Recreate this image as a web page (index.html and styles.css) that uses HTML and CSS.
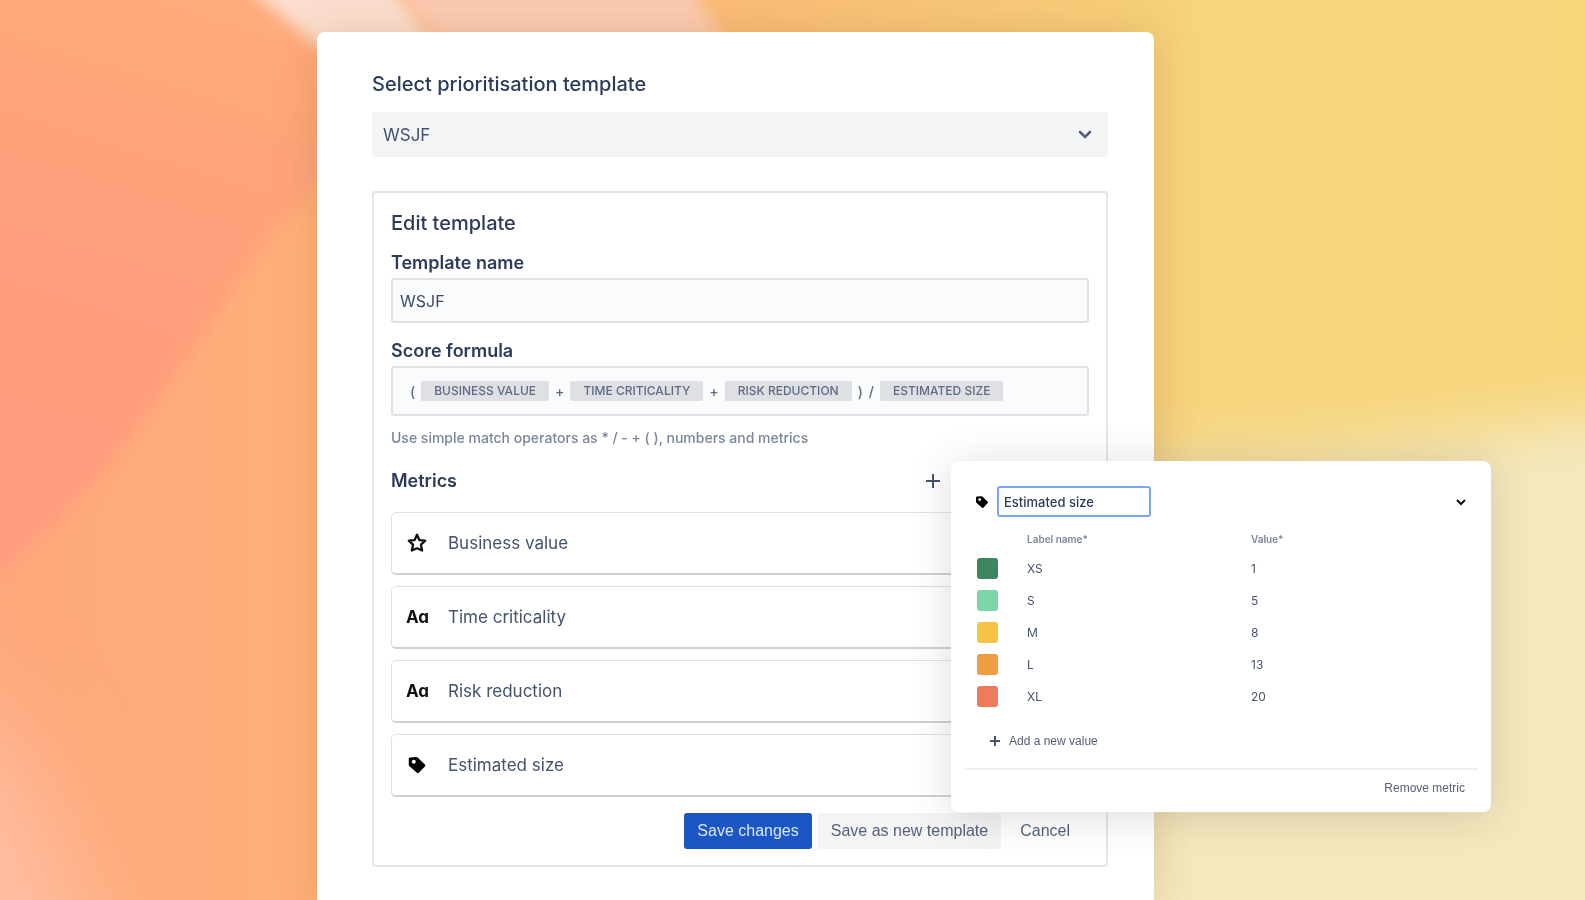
FILE: index.html
```
<!DOCTYPE html>
<html lang="en">
<head>
    <meta charset="UTF-8">
    <meta name="viewport" content="width=device-width, initial-scale=1.0">
    <title>Prioritisation template</title>
    <link rel="stylesheet" href="styles.css">
</head>
<body>
    <svg class="backdrop" viewBox="0 0 1585 900" preserveAspectRatio="none" aria-hidden="true">
        <defs>
            <linearGradient id="base" x1="0" y1="0" x2="1" y2="0">
                <stop offset="0" stop-color="#fea77b"/>
                <stop offset="0.18" stop-color="#ffaf79"/>
                <stop offset="0.48" stop-color="#fabd76"/>
                <stop offset="0.72" stop-color="#f6cf79"/>
                <stop offset="0.76" stop-color="#f6d57e"/>
                <stop offset="1" stop-color="#f7d57b"/>
            </linearGradient>
            <linearGradient id="coral" gradientUnits="userSpaceOnUse" x1="260" y1="0" x2="100" y2="500">
                <stop offset="0" stop-color="#ffab7a"/>
                <stop offset="0.3" stop-color="#fea37a"/>
                <stop offset="0.6" stop-color="#ff9f7b"/>
                <stop offset="1" stop-color="#ff9a80"/>
            </linearGradient>
            <filter id="soft" x="-50%" y="-50%" width="200%" height="200%">
                <feGaussianBlur stdDeviation="8"/>
            </filter>
            <filter id="softer" x="-50%" y="-50%" width="200%" height="200%">
                <feGaussianBlur stdDeviation="50"/>
            </filter>
            <filter id="cream" x="-50%" y="-50%" width="200%" height="200%">
                <feGaussianBlur stdDeviation="30"/>
            </filter>
        </defs>
        <rect width="1585" height="900" fill="url(#base)"/>
        <path d="M-200 640C0 650 40 780 130 1050H-200Z" fill="#ffbfa2" filter="url(#softer)"/>
        <path d="M-60 -60H360V150C230 230 170 470 -60 610Z" fill="url(#coral)" filter="url(#soft)"/>
        <path d="M225 -30H380L450 60H335Z" fill="#fbdecf" filter="url(#soft)"/>
        <path d="M380 -30H680L735 60H450Z" fill="#fbcab0" filter="url(#soft)"/>
        <path d="M850 480C1300 470 1450 430 1700 400V1100H850Z" fill="#f4e8bd" filter="url(#cream)"/>
    </svg>

    <main class="stage">
        <form class="panel">
            <label class="panel-title" for="template">Select prioritisation template</label>
            <div class="select-wrap">
                <select id="template">
                    <option>WSJF</option>
                </select>
                <svg class="select-arrow" width="16" height="16" viewBox="0 0 16 16" aria-hidden="true"><path d="M3 6l5 5 5-5"/></svg>
            </div>

            <section class="editor">
                <h2>Edit template</h2>

                <label class="field-label" for="templateName">Template name</label>
                <input class="text-field" type="text" id="templateName" value="WSJF">

                <h3 class="field-label">Score formula</h3>
                <div class="formula">
                    <span>(</span>
                    <span class="chip">BUSINESS VALUE</span>
                    <span>+</span>
                    <span class="chip">TIME CRITICALITY</span>
                    <span>+</span>
                    <span class="chip">RISK REDUCTION</span>
                    <span>)</span>
                    <span>/</span>
                    <span class="chip">ESTIMATED SIZE</span>
                </div>
                <p class="hint">Use simple match operators as * / - + ( ), numbers and metrics</p>

                <div class="metrics-head">
                    <h3>Metrics</h3>
                    <button type="button" class="icon-button" aria-label="Add metric">
                        <svg class="line-icon" width="16" height="16" viewBox="0 0 16 16"><path d="M8 1v14M1 8h14"/></svg>
                    </button>
                </div>

                <ul class="metrics">
                    <li>
                        <svg class="metric-icon star" viewBox="0 0 24 24" aria-hidden="true"><path d="M12 3l2.600 5.800 6.400.7-4.700 4.300 1.300 6.400-5.600-2.400-5.600 2.400 1.300-6.400L3 9.500l6.400-.7z"/></svg>
                        Business value
                    </li>
                    <li><span class="metric-icon letters">Aa</span>Time criticality</li>
                    <li><span class="metric-icon letters">Aa</span>Risk reduction</li>
                    <li>
                        <svg class="metric-icon tag" viewBox="0 0 24 24" aria-hidden="true"><path fill-rule="evenodd" d="M3 5.500Q3 4 4.500 3.800L11 3.200Q12.200 3.100 13 4L20.600 11.500Q21.600 12.500 20.600 13.500L14 20.500Q13 21.500 12 20.500L4 13.500Q3 12.600 3 11.500ZM8.500 6.200a2.200 2.200 0 1 0 0 4.400a2.200 2.200 0 1 0 0-4.400z"/></svg>
                        Estimated size
                    </li>
                </ul>

                <div class="actions">
                    <button type="button" class="primary">Save changes</button>
                    <button type="button" class="secondary">Save as new template</button>
                    <button type="button" class="plain">Cancel</button>
                </div>
            </section>
        </form>

        <aside class="popup">
            <div class="popup-head">
                <svg class="tag" width="16" height="16" viewBox="0 0 24 24" aria-hidden="true"><path fill-rule="evenodd" d="M3 5.500Q3 4 4.500 3.800L11 3.200Q12.200 3.100 13 4L20.600 11.500Q21.600 12.500 20.600 13.500L14 20.500Q13 21.500 12 20.500L4 13.500Q3 12.600 3 11.500ZM8.500 6.200a2.200 2.200 0 1 0 0 4.400a2.200 2.200 0 1 0 0-4.400z"/></svg>
                <input type="text" value="Estimated size" aria-label="Metric name">
                <button type="button" class="icon-button collapse" aria-label="Collapse">
                    <svg class="line-icon" width="12" height="12" viewBox="0 0 12 12"><path d="M2 4l4 4 4-4"/></svg>
                </button>
            </div>

            <table class="values">
                <thead>
                    <tr><td></td><th>Label name*</th><th>Value*</th></tr>
                </thead>
                <tbody>
                    <tr><td><span class="swatch xs"></span></td><td>XS</td><td>1</td></tr>
                    <tr><td><span class="swatch s"></span></td><td>S</td><td>5</td></tr>
                    <tr><td><span class="swatch m"></span></td><td>M</td><td>8</td></tr>
                    <tr><td><span class="swatch l"></span></td><td>L</td><td>13</td></tr>
                    <tr><td><span class="swatch xl"></span></td><td>XL</td><td>20</td></tr>
                </tbody>
            </table>

            <button type="button" class="add-value">
                <svg class="line-icon" width="12" height="12" viewBox="0 0 12 12" aria-hidden="true"><path d="M6 1v10M1 6h10"/></svg>
                Add a new value
            </button>
            <div class="popup-foot">
                <button type="button">Remove metric</button>
            </div>
        </aside>
    </main>
</body>
</html>
```
FILE: styles.css
```
* {
    box-sizing: border-box;
}
body {
    margin: 0;
    font-family: Inter, "Liberation Sans", sans-serif;
    color: #2c3b5c;
    background: #fcae78;
}
h2, h3, p, ul {
    margin: 0;
    padding: 0;
}
button, input, select {
    font: inherit;
    color: inherit;
}
button {
    border: none;
    background: none;
    padding: 0;
    cursor: pointer;
    font-family: "Liberation Sans", Arial, sans-serif;
}
.backdrop {
    position: fixed;
    top: 0;
    left: 0;
    width: 100%;
    height: 100%;
    z-index: -1;
}
.stage {
    position: relative;
    display: flex;
    min-height: 100vh;
    padding-top: 32px;
}

/* main panel */
.panel {
    width: 53%;
    max-width: 837px;
    margin-left: 20%;
    padding: 40px 46px 33px 55px;
    background: #fff;
    border-radius: 8px 8px 0 0;
    box-shadow: 0 4px 40px rgba(150, 100, 50, 0.25);
}
.panel-title {
    display: block;
    font-size: 20px;
    line-height: 24px;
    font-weight: 500;
}
.select-wrap {
    position: relative;
    margin-top: 16px;
}
.select-wrap select {
    display: block;
    width: 100%;
    height: 45px;
    padding: 0 11px;
    border: none;
    border-radius: 3px;
    background: #f3f4f6;
    color: #44526f;
    font-size: 17px;
    appearance: none;
}
.select-arrow {
    position: absolute;
    right: 15px;
    top: 14px;
    fill: none;
    stroke: #505f7b;
    stroke-width: 2.5;
    stroke-linecap: round;
}
.editor {
    margin-top: 34px;
    padding: 18px 17px 16px;
    border: 2px solid #e4e5e9;
    border-radius: 4px;
}
.editor h2 {
    font-size: 20px;
    line-height: 24px;
    font-weight: 500;
}
.field-label {
    display: block;
    margin-top: 16px;
    font-size: 18px;
    line-height: 24px;
    font-weight: 600;
}
.text-field {
    display: block;
    width: 100%;
    height: 45px;
    margin-top: 3px;
    padding: 0 7px;
    border: 2px solid #dfe1e5;
    border-radius: 3px;
    background: #fafbfd;
    color: #3a4865;
    font-size: 16px;
}
.formula {
    display: flex;
    align-items: center;
    gap: 6px;
    height: 50px;
    margin-top: 3px;
    padding: 0 17px;
    border: 2px solid #dfe1e5;
    border-radius: 3px;
    background: #fafbfd;
    color: #5e6b85;
    font-size: 14px;
    font-weight: 500;
}
.chip {
    padding: 0 13px;
    border-radius: 2px;
    background: #dfe0e4;
    font-size: 12px;
    line-height: 20px;
}
.hint {
    margin-top: 14px;
    font-size: 14px;
    line-height: 16px;
    font-weight: 500;
    color: #7a869b;
}
.metrics-head {
    display: flex;
    justify-content: space-between;
    align-items: center;
    margin-top: 23px;
    padding-right: 148px;
}
.metrics-head h3 {
    font-size: 18px;
    line-height: 24px;
    font-weight: 600;
}
.icon-button {
    display: flex;
}
.line-icon {
    fill: none;
    stroke: #44526f;
    stroke-width: 2;
}
.metrics {
    display: grid;
    gap: 11px;
    margin-top: 19px;
    list-style: none;
}
.metrics li {
    display: flex;
    align-items: center;
    gap: 20px;
    height: 63px;
    padding: 0 14px;
    border: 1px solid #dfe1e5;
    border-bottom: 2px solid #cfd0d4;
    border-radius: 5px;
    color: #44526f;
    font-size: 17px;
}
.metric-icon {
    width: 22px;
    height: 22px;
}
.star {
    fill: none;
    stroke: #111;
    stroke-width: 2.5;
    stroke-linejoin: round;
}
.letters {
    color: #111;
    font-size: 17px;
    line-height: 22px;
    font-weight: 700;
    font-feature-settings: "cv11";
}
.tag {
    fill: #000;
}
.actions {
    display: flex;
    justify-content: flex-end;
    gap: 6px;
    margin: 16px 6px 0 0;
}
.actions button {
    height: 36px;
    border-radius: 3px;
    padding: 0 13px;
    font-size: 16px;
}
.actions .primary {
    background: #1b56c4;
    color: #dbe6fb;
}
.actions .secondary {
    background: #f4f4f5;
    color: #55617b;
}
.actions .plain {
    color: #55617b;
}

/* metric popup */
.popup {
    position: absolute;
    left: 60%;
    top: 461px;
    width: 540px;
    padding: 25px 13px 11px;
    border-radius: 8px;
    background: #fff;
    box-shadow: 0 4px 40px rgba(60, 60, 60, 0.18);
}
.popup-head {
    display: flex;
    align-items: center;
    gap: 7px;
    padding: 0 11px 0 10px;
}
.popup-head input {
    width: 154px;
    height: 31px;
    padding: 0 5px;
    border: 2px solid #7aa7f7;
    border-radius: 3px;
    background: #fff;
    font-size: 13px;
    font-weight: 500;
}
.collapse {
    margin-left: auto;
}
.collapse .line-icon {
    stroke: #111;
}
.values {
    width: 100%;
    margin-top: 9px;
    border-spacing: 0;
    table-layout: fixed;
    color: #44526f;
    font-size: 12px;
}
.values th, .values td {
    height: 32px;
    padding: 0;
    text-align: left;
}
.values thead td, .values thead th {
    height: 26px;
    font-size: 10px;
    font-weight: 600;
    color: #7a869b;
}
.values td:first-child {
    width: 63px;
    padding-left: 13px;
}
.values th:nth-child(2) {
    width: 224px;
}
.swatch {
    display: block;
    width: 21px;
    height: 21px;
    border-radius: 3px;
}
.xs { background: #3d865f; }
.s { background: #7dd6a7; }
.m { background: #f6c344; }
.l { background: #f09d42; }
.xl { background: #ef7b5e; }
.add-value {
    display: flex;
    align-items: center;
    gap: 8px;
    margin: 21px 0 0 25px;
    color: #55617b;
    font-size: 12px;
    line-height: 16px;
}
.popup-foot {
    display: flex;
    justify-content: flex-end;
    margin-top: 19px;
    padding: 10px 13px 5px;
    border-top: 2px solid #eeeff1;
    color: #55617b;
    font-size: 12px;
    line-height: 16px;
}
```
